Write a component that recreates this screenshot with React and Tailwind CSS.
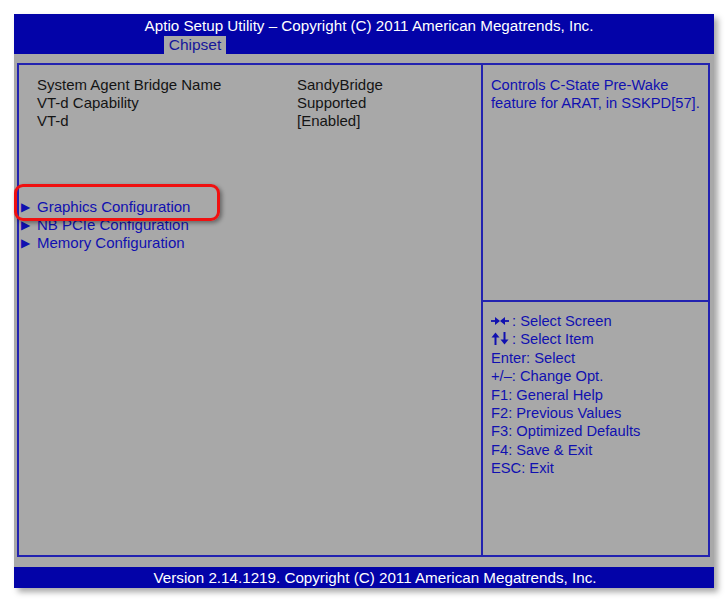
import React from 'react'

const settings = [
  ['System Agent Bridge Name', 'SandyBridge'],
  ['VT-d Capability',          'Supported'],
  ['VT-d',                     '[Enabled]'],
]

const menus = ['Graphics Configuration', 'NB PCIe Configuration', 'Memory Configuration']

const keys = [
  'Enter: Select',
  '+/\u2013: Change Opt.',
  'F1: General Help',
  'F2: Previous Values',
  'F3: Optimized Defaults',
  'F4: Save & Exit',
  'ESC: Exit',
]

function InArrows() {
  return (
    <svg width="18" height="10" viewBox="0 0 18 10" className="inline-block mr-[3px] align-[0px]">
      <path d="M0 5h5" stroke="#1010b0" strokeWidth="1.8" />
      <path d="M4 1L9 5L4 9z" fill="#1010b0" />
      <path d="M18 5h-5" stroke="#1010b0" strokeWidth="1.8" />
      <path d="M14 1L9 5L14 9z" fill="#1010b0" />
    </svg>
  )
}

function UpDown() {
  return (
    <svg width="18" height="13" viewBox="0 0 18 13" className="inline-block mr-[3px] align-[-1px]">
      <path d="M4.5 13V4" stroke="#1010b0" strokeWidth="2" />
      <path d="M0.5 5.5L4.5 0.5L8.5 5.5z" fill="#1010b0" />
      <path d="M13.5 0V9" stroke="#1010b0" strokeWidth="2" />
      <path d="M9.5 7.5L13.5 12.5L17.5 7.5z" fill="#1010b0" />
    </svg>
  )
}

export default function App() {
  return (
    <div className="relative w-[728px] h-[603px] bg-white pt-[14px] pl-[14px]" style={{ fontFamily: '"Liberation Sans", Arial, sans-serif' }}>
      <div className="w-[700px] h-[574px] flex flex-col shadow-[4px_4px_6px_rgba(0,0,0,0.35)]">
        {/* header */}
        <div className="h-[40px] bg-[#0303a8] flex flex-col">
          <div className="h-[22px] pt-[1px] pl-[10px] text-center text-white text-[15.2px] leading-[22px]">
            Aptio Setup Utility – Copyright (C) 2011 American Megatrends, Inc.
          </div>
          <div className="flex-1 flex items-end pl-[150px]">
            <div className="w-[62px] h-[18px] bg-[#a8a8a8] text-[#16169a] text-[15.5px] leading-[18px] text-center">
              Chipset
            </div>
          </div>
        </div>

        {/* body */}
        <div className="flex-1 bg-[#a8a8a8] pt-[9px] pb-[10px] pl-[3px] pr-[4px] flex">
          <div className="flex-1 border-2 border-[#2222b0] flex">
            <div className="w-[464px] border-r-2 border-[#2222b0] pt-[11px] text-[15px] leading-[18px]">
              {settings.map(([k, v]) => (
                <div key={k} className="flex pl-[18px] text-[#141414]">
                  <span className="w-[260px]">{k}</span>
                  <span>{v}</span>
                </div>
              ))}
              <div className="mt-[68px]">
                {menus.map(m => (
                  <div key={m} className="flex items-center text-[#1010b0]">
                    <span className="w-[18px] pl-[2px] text-[12px] leading-[18px]">▶</span>
                    <span>{m}</span>
                  </div>
                ))}
              </div>
            </div>
            <div className="flex-1 flex flex-col text-[14.7px] leading-[18.4px] text-[#1010b0]">
              <div className="h-[237px] border-b-2 border-[#2222b0] pt-[11px] pl-[8px]">
                Controls C-State Pre-Wake<br />feature for ARAT, in SSKPD[57].
              </div>
              <div className="pt-[10px] pl-[8px]">
                <div><InArrows />: Select Screen</div>
                <div><UpDown />: Select Item</div>
                {keys.map(k => <div key={k}>{k}</div>)}
              </div>
            </div>
          </div>
        </div>

        {/* footer */}
        <div className="h-[21px] bg-[#0303a8] text-white text-[15.2px] leading-[21px] text-center pl-[22px]">
          Version 2.14.1219. Copyright (C) 2011 American Megatrends, Inc.
        </div>
      </div>

      {/* red highlight */}
      <div className="absolute left-[14px] top-[184px] w-[206px] h-[37px] rounded-[9px] border-[3px] border-[#f01010] shadow-[2px_2px_4px_rgba(0,0,0,0.4)]" />
    </div>
  )
}
